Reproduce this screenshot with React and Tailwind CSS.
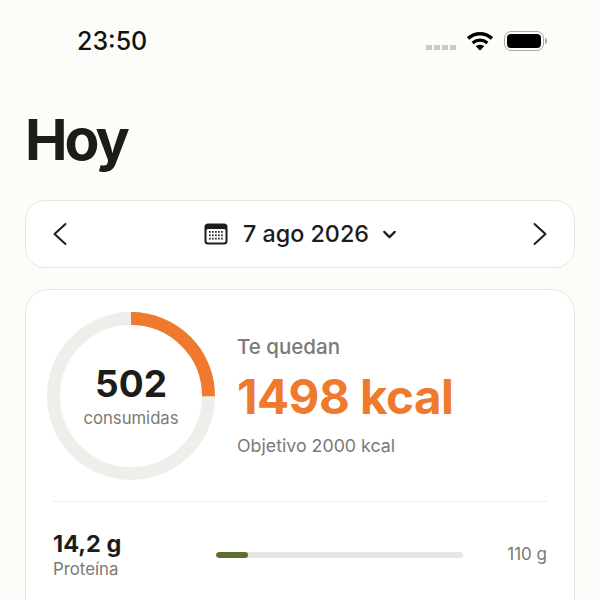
import React from 'react';
import { ChevronDown } from 'lucide-react';

const font = "font-['Inter','Liberation_Sans',sans-serif]";

function Wifi() {
  return (
    <svg width="28" height="20" viewBox="0 0 28 20" fill="none">
      <path d="M2 7.5C9 1.2 19 1.2 26 7.5" stroke="#000" strokeWidth="3.4" />
      <path d="M6.6 12C11 8.2 17 8.2 21.4 12" stroke="#000" strokeWidth="3.2" />
      <path d="M14 19.5 9.8 15.2C12.2 13.2 15.8 13.2 18.2 15.2Z" fill="#000" />
    </svg>
  );
}

function Battery() {
  return (
    <div className="flex items-center gap-[1px]">
      <div className="w-[40px] h-[20px] rounded-[7px] border-[1.5px] border-[#a9a9a7] p-[2px]">
        <div className="w-full h-full rounded-[4px] bg-black" />
      </div>
      <div className="w-[2px] h-[6px] rounded-r-sm bg-[#a9a9a7]" />
    </div>
  );
}

function CalendarIcon() {
  const dots = [0, 1, 2, 3, 4, 5, 6, 7, 8, 9, 10, 11, 12, 13, 14];
  return (
    <svg width="24" height="22" viewBox="0 0 24 22">
      <rect x="0.5" y="0.5" width="23" height="21" rx="3.5" fill="#1c1c1a" />
      <rect x="2.5" y="6" width="19" height="13.5" rx="1.5" fill="#fcfcfa" />
      {dots.map(i => (
        <rect key={i} x={5 + (i % 5) * 3} y={8 + Math.floor(i / 5) * 3.4} width="1.8" height="1.8" fill="#3a3a38" />
      ))}
    </svg>
  );
}

// thin tall chevrons, the lucide ones are too stubby at this height
function Chevron({ dir }) {
  return (
    <svg width="14" height="24" viewBox="0 0 14 24" fill="none" stroke="#1c1c1a" strokeWidth="2" strokeLinecap="round" strokeLinejoin="round">
      <path d={dir === 'left' ? 'M12.5 2 1.5 12l11 10' : 'M1.5 2l11 10-11 10'} />
    </svg>
  );
}

function Ring() {
  const r = 77.5;
  const c = 2 * Math.PI * r;
  return (
    <div className="relative w-[168px] h-[168px] shrink-0">
      <svg width="168" height="168" viewBox="0 0 168 168" className="-rotate-90">
        <circle cx="84" cy="84" r={r} fill="none" stroke="#eeeeea" strokeWidth="13" />
        <circle cx="84" cy="84" r={r} fill="none" stroke="#ef7a2d" strokeWidth="13" strokeDasharray={`${c * 0.25} ${c}`} />
      </svg>
      <div className="absolute inset-0 flex flex-col items-center justify-center">
        <span className="text-[37px] leading-[40px] font-bold text-[#1c1c1a]">502</span>
        <span className="text-[16.7px] leading-[20px] mt-[4px] text-[#7a7a76]">consumidas</span>
      </div>
    </div>
  );
}

export default function App() {
  return (
    <div className={`${font} w-[600px] h-[600px] overflow-hidden bg-[#fcfcf8] text-[#1c1c1a]`}>
      <div className="flex items-center justify-between pt-[27px] pl-[77px] pr-[53px] h-[55px]">
        <span className="text-[25px] leading-[30px] font-medium text-[#111]">23:50</span>
        <div className="flex items-center">
          <div className="flex gap-[2px] mt-[13px] mr-[10px]">
            <span className="w-[6px] h-[5px] bg-[#c9c9c7]" />
            <span className="w-[6px] h-[5px] bg-[#c9c9c7]" />
            <span className="w-[6px] h-[5px] bg-[#c9c9c7]" />
            <span className="w-[6px] h-[5px] bg-[#c9c9c7]" />
          </div>
          <Wifi />
          <div className="ml-[10px]">
            <Battery />
          </div>
        </div>
      </div>

      <div className="px-[25px]">
        <h1 className="mt-[52px] text-[57px] leading-[66px] font-bold tracking-[-3px] text-[#1c1c1a]">Hoy</h1>

        <div className="mt-[27px] h-[68px] flex items-center justify-between px-[27px] bg-white rounded-[20px] border border-[#e8e8e1]">
          <Chevron dir="left" />
          <div className="flex items-center pl-[4px]">
            <CalendarIcon />
            <span className="ml-[15px] text-[23.3px] leading-[30px] font-medium">7 ago 2026</span>
            <ChevronDown size={21} strokeWidth={2.5} className="ml-[10px]" />
          </div>
          <Chevron dir="right" />
        </div>

        <div className="mt-[21px] h-[400px] bg-white rounded-[24px] border border-[#e8e8e1] pt-[22px] px-[21px]">
          <div className="flex items-center">
            <Ring />
            <div className="ml-[22px]">
              <p className="text-[20.5px] leading-[24px] font-medium text-[#7a7a76]">Te quedan</p>
              <p className="mt-[10px] text-[47.5px] leading-[56px] font-bold tracking-[-0.5px] text-[#ef7a2d]">1498 kcal</p>
              <p className="mt-[9px] text-[17.8px] leading-[24px] text-[#7a7a76]">Objetivo 2000 kcal</p>
            </div>
          </div>

          <div className="mt-[21px] h-px bg-[#eeeeea] mx-[6px]" />

          <div className="mt-[27px] flex items-center mx-[6px]">
            <div className="w-[163px]">
              <p className="text-[23.5px] leading-[30px] font-bold">14,2 g</p>
              <p className="text-[16.8px] leading-[20px] text-[#7a7a76]">Proteína</p>
            </div>
            <div className="w-[247px] h-[6px] mt-[2px] rounded-full bg-[#e6e6e3] overflow-hidden">
              <div className="h-full rounded-full bg-[#5c6f2d]" style={{ width: `${(14.2 / 110) * 100}%` }} />
            </div>
            <span className="ml-auto text-[17px] leading-[20px] text-[#7a7a76]">110 g</span>
          </div>
        </div>
      </div>
    </div>
  );
}
